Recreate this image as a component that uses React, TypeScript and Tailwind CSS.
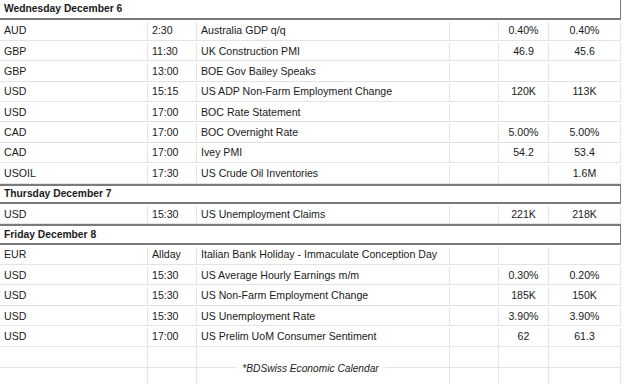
import React from "react";

type Row = { cur: string; time: string; event: string; actual?: string; forecast?: string };

const days: { title: string; rows: Row[] }[] = [
  {
    title: "Wednesday December 6",
    rows: [
      { cur: "AUD", time: "2:30", event: "Australia GDP q/q", actual: "0.40%", forecast: "0.40%" },
      { cur: "GBP", time: "11:30", event: "UK Construction PMI", actual: "46.9", forecast: "45.6" },
      { cur: "GBP", time: "13:00", event: "BOE Gov Bailey Speaks" },
      { cur: "USD", time: "15:15", event: "US ADP Non-Farm Employment Change", actual: "120K", forecast: "113K" },
      { cur: "USD", time: "17:00", event: "BOC Rate Statement" },
      { cur: "CAD", time: "17:00", event: "BOC Overnight Rate", actual: "5.00%", forecast: "5.00%" },
      { cur: "CAD", time: "17:00", event: "Ivey PMI", actual: "54.2", forecast: "53.4" },
      { cur: "USOIL", time: "17:30", event: "US Crude Oil Inventories", forecast: "1.6M" },
    ],
  },
  {
    title: "Thursday December 7",
    rows: [{ cur: "USD", time: "15:30", event: "US Unemployment Claims", actual: "221K", forecast: "218K" }],
  },
  {
    title: "Friday December 8",
    rows: [
      { cur: "EUR", time: "Allday", event: "Italian Bank Holiday - Immaculate Conception Day" },
      { cur: "USD", time: "15:30", event: "US Average Hourly Earnings m/m", actual: "0.30%", forecast: "0.20%" },
      { cur: "USD", time: "15:30", event: "US Non-Farm Employment Change", actual: "185K", forecast: "150K" },
      { cur: "USD", time: "15:30", event: "US Unemployment Rate", actual: "3.90%", forecast: "3.90%" },
      { cur: "USD", time: "17:00", event: "US Prelim UoM Consumer Sentiment", actual: "62", forecast: "61.3" },
    ],
  },
];

const DataRow = ({ row }: { row: Row }) => (
  <div className="flex h-[20.4px] items-center border-b border-[#e4e4e4] pt-[2px]">
    <div className="w-[148px] h-full flex items-center pl-1 border-r border-[#e4e4e4]">{row.cur}</div>
    <div className="w-[49px] h-full flex items-center pl-1 border-r border-[#e4e4e4]">{row.time}</div>
    <div className="w-[253px] h-full flex items-center pl-1 border-r border-[#e4e4e4] whitespace-nowrap">{row.event}</div>
    <div className="w-[49px] h-full border-r border-[#e4e4e4]" />
    <div className="w-[50px] h-full flex items-center justify-center border-r border-[#e4e4e4]">{row.actual}</div>
    <div className="w-[72px] h-full flex items-center justify-center border-r border-[#e4e4e4]">{row.forecast}</div>
  </div>
);

const EmptyRow = ({ h }: { h: string }) => (
  <div className={`flex ${h} border-b border-[#e4e4e4]`}>
    <div className="w-[148px] border-r border-[#e4e4e4]" />
    <div className="w-[49px] border-r border-[#e4e4e4]" />
    <div className="w-[253px] border-r border-[#e4e4e4]" />
    <div className="w-[49px] border-r border-[#e4e4e4]" />
    <div className="w-[50px] border-r border-[#e4e4e4]" />
    <div className="w-[72px] border-r border-[#e4e4e4]" />
  </div>
);

export default function App() {
  return (
    <div className="w-[624px] h-[384px] bg-white overflow-hidden text-[10.6px] text-[#1a1a1a] font-['Liberation_Sans',Arial,sans-serif]">
      <div className="w-[621px]">
        {days.map((day, i) => (
          <div key={day.title}>
            <div
              className={`h-[20.4px] flex items-center pl-1 font-bold text-[10.3px] border-r border-b-2 border-[#7a7a7a] ${
                i === 0 ? "" : "border-t-2"
              }`}
            >
              {day.title}
            </div>
            {day.rows.map((r, j) => (
              <DataRow key={j} row={r} />
            ))}
          </div>
        ))}
        <div className="relative">
          <EmptyRow h="h-[21px]" />
          <EmptyRow h="h-[20px]" />
          <div className="absolute left-0 right-0 top-[14px] flex justify-center">
            <span className="bg-white px-[6px] italic text-[10.2px]">*BDSwiss Economic Calendar</span>
          </div>
        </div>
      </div>
    </div>
  );
}
